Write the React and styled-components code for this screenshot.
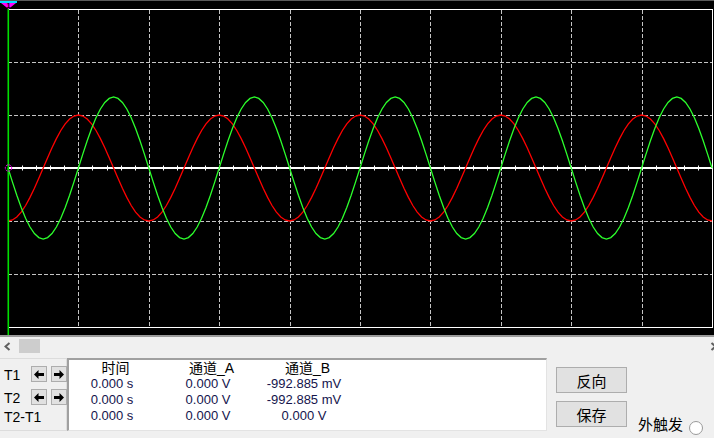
import React from "react";
import styled, { createGlobalStyle } from "styled-components";

const GlobalStyle = createGlobalStyle`
  html, body {
    margin: 0;
    padding: 0;
    background: #f0f0f0;
    font-family: "Liberation Sans", "Noto Sans CJK SC", sans-serif;
  }
`;

const Window = styled.div`
  width: 714px;
  height: 438px;
  overflow: hidden;
  background: #f0f0f0;
`;

const Screen = styled.div`
  height: 335px;
  background: #000;
  border-bottom: 2px solid #9a9a9a;
  svg {
    display: block;
  }
`;

const ScrollRow = styled.div`
  height: 21px;
  display: flex;
  align-items: flex-start;
  justify-content: space-between;
  padding-left: 4px;
  box-sizing: border-box;
  overflow: hidden;
`;

const ScrollArrow = styled.svg`
  margin-top: 5px;
  margin-right: ${(p) => (p.$right ? "-3px" : "0")};
`;

const Thumb = styled.div`
  width: 21px;
  height: 14px;
  margin-top: 2px;
  margin-left: 8px;
  background: #cdcdcd;
`;

const Spacer = styled.div`
  flex: 1;
`;

const Panel = styled.div`
  height: 80px;
  display: flex;
  align-items: flex-start;
`;

const CursorGroup = styled.div`
  width: 67px;
  height: 73px;
  box-sizing: border-box;
  border-top: 1px solid #dcdcdc;
  border-right: 1px solid #dcdcdc;
  border-bottom: 1px solid #dcdcdc;
  padding: 7px 0 0 4px;
  display: grid;
  grid-template-columns: 23px 16px 16px;
  grid-auto-rows: 16px;
  column-gap: 4px;
  row-gap: 7px;
  font-size: 14px;
  color: #000;
`;

const CursorLabel = styled.div`
  line-height: 19px;
  grid-column: ${(p) => (p.$wide ? "1 / 4" : "auto")};
  margin-top: ${(p) => (p.$wide ? "-4px" : "0")};
`;

const StepButton = styled.div`
  width: 16px;
  height: 16px;
  box-sizing: border-box;
  background: #e1e1e1;
  border: 1px solid #adadad;
  display: flex;
  align-items: center;
  justify-content: center;
`;

const Readout = styled.div`
  width: 480px;
  height: 73px;
  box-sizing: border-box;
  background: #fff;
  border-top: 2px solid #a0a0a0;
  border-left: 2px solid #a0a0a0;
  border-right: 1px solid #e3e3e3;
  border-bottom: 1px solid #e3e3e3;
  display: grid;
  grid-template-columns: 86px 106px 86px;
  grid-auto-rows: 16px;
  align-content: start;
`;

const Cell = styled.div`
  text-align: center;
  line-height: 16px;
  white-space: nowrap;
  font-size: ${(p) => (p.$head ? "14px" : "13px")};
  color: ${(p) => (p.$head ? "#000" : "#14144c")};
  padding-left: ${(p) => (p.$head ? "7px" : "0")};
`;

const Actions = styled.div`
  margin-left: 9px;
  padding-top: 9px;
  display: flex;
  flex-direction: column;
  gap: 8px;
`;

const ActionButton = styled.div`
  width: 71px;
  height: 26px;
  box-sizing: border-box;
  background: #e1e1e1;
  border: 1px solid #adadad;
  display: flex;
  align-items: center;
  justify-content: center;
  font-size: 15px;
  color: #000;
`;

const Trigger = styled.div`
  align-self: flex-end;
  margin-left: 11px;
  margin-bottom: 3px;
  display: flex;
  align-items: flex-end;
  gap: 6px;
`;

const TriggerText = styled.span`
  font-size: 15px;
  line-height: 16px;
  margin-bottom: 2px;
  color: #000;
`;

const Radio = styled.div`
  width: 14px;
  height: 14px;
  box-sizing: border-box;
  border-radius: 50%;
  border: 1px solid #9a9a9a;
  background: #fff;
`;

const W = 714;
const H = 335;
const X0 = 8;
const X1 = 712;
const Y0 = 9;
const Y1 = 327;
const MID = 168;
const PERIOD = 140.8;

function trace(fn) {
  const pts = [];
  for (let x = X0; x <= X1 + 0.01; x += PERIOD / 32) {
    const t = (2 * Math.PI * (x - X0)) / PERIOD;
    pts.push(`${x.toFixed(1)},${fn(t).toFixed(1)}`);
  }
  return pts.join(" ");
}

function Scope() {
  const cols = Array.from({ length: 9 }, (_, i) => Math.round(X0 + 70.4 * (i + 1)) + 0.5);
  const rows = [62, 115, 221, 274].map((y) => y + 0.5);
  const ticks = Array.from({ length: 49 }, (_, k) => Math.round(X0 + 14.08 * (k + 1)) + 0.5);

  return (
    <svg width={W} height={H} viewBox={`0 0 ${W} ${H}`}>
      <rect x="0" y="0" width={W} height="1" fill="#5a5a5a" />
      <g stroke="#c4c4c4" strokeWidth="1" strokeDasharray="4 2">
        {cols.map((x) => (
          <line key={x} x1={x} y1={Y0 + 1} x2={x} y2={Y1} />
        ))}
        {rows.map((y) => (
          <line key={y} x1={X0} y1={y} x2={X1} y2={y} />
        ))}
      </g>
      <rect x={X0 + 0.5} y={Y0 + 0.5} width={X1 - X0} height={Y1 - Y0} fill="none" stroke="#fff" strokeWidth="1" />
      <rect x={X0} y={MID - 1} width={X1 - X0} height="2" fill="#fff" />
      <g stroke="#fff" strokeWidth="1">
        {ticks.map((x) => (
          <line key={x} x1={x} y1={MID - 2.5} x2={x} y2={MID + 2.5} />
        ))}
      </g>
      <polyline points={trace((t) => MID + 53 * Math.cos(t))} fill="none" stroke="#ff0000" strokeWidth="1.3" />
      <polyline points={trace((t) => MID + 71 * Math.sin(t))} fill="none" stroke="#2cff2c" strokeWidth="1.3" />
      <rect x="7.5" y={Y0} width="1.6" height={H - Y0} fill="#00e000" />
      <circle cx="8.5" cy={MID} r="3.2" fill="none" stroke="#ff00ff" strokeWidth="1" strokeDasharray="2 1" />
      <polygon points="0,1 17,1 17,3 0,3" fill="#00e0ff" />
      <polygon points="1,3 16,3 8.5,9" fill="#ff00ff" />
      <text x="8.5" y="7.5" fontSize="7" fontWeight="bold" textAnchor="middle" fill="#000" fontFamily="Liberation Sans, sans-serif">
        1
      </text>
    </svg>
  );
}

function Arrow({ dir }) {
  const pts =
    dir === "left"
      ? "0,4.5 4.5,0 4.5,3 10,3 10,6 4.5,6 4.5,9"
      : "10,4.5 5.5,0 5.5,3 0,3 0,6 5.5,6 5.5,9";
  return (
    <svg width="10" height="9" viewBox="0 0 10 9">
      <polygon points={pts} fill="#000" />
    </svg>
  );
}

function Chevron({ right }) {
  return (
    <ScrollArrow $right={right} width="7" height="9" viewBox="0 0 7 9">
      <polyline
        points={right ? "1.5,1 5.5,4.5 1.5,8" : "5.5,1 1.5,4.5 5.5,8"}
        fill="none"
        stroke="#606060"
        strokeWidth="2"
      />
    </ScrollArrow>
  );
}

const readings = [
  ["0.000 s", "0.000 V", "-992.885 mV"],
  ["0.000 s", "0.000 V", "-992.885 mV"],
  ["0.000 s", "0.000 V", "0.000 V"],
];

export default function App() {
  return (
    <Window>
      <GlobalStyle />
      <Screen>
        <Scope />
      </Screen>
      <ScrollRow>
        <Chevron />
        <Thumb />
        <Spacer />
        <Chevron right />
      </ScrollRow>
      <Panel>
        <CursorGroup>
          <CursorLabel>T1</CursorLabel>
          <StepButton>
            <Arrow dir="left" />
          </StepButton>
          <StepButton>
            <Arrow dir="right" />
          </StepButton>
          <CursorLabel>T2</CursorLabel>
          <StepButton>
            <Arrow dir="left" />
          </StepButton>
          <StepButton>
            <Arrow dir="right" />
          </StepButton>
          <CursorLabel $wide>T2-T1</CursorLabel>
        </CursorGroup>
        <Readout>
          <Cell $head>时间</Cell>
          <Cell $head>通道_A</Cell>
          <Cell $head>通道_B</Cell>
          {readings.flat().map((v, i) => (
            <Cell key={i}>{v}</Cell>
          ))}
        </Readout>
        <Actions>
          <ActionButton>反向</ActionButton>
          <ActionButton>保存</ActionButton>
        </Actions>
        <Trigger>
          <TriggerText>外触发</TriggerText>
          <Radio />
        </Trigger>
      </Panel>
    </Window>
  );
}
